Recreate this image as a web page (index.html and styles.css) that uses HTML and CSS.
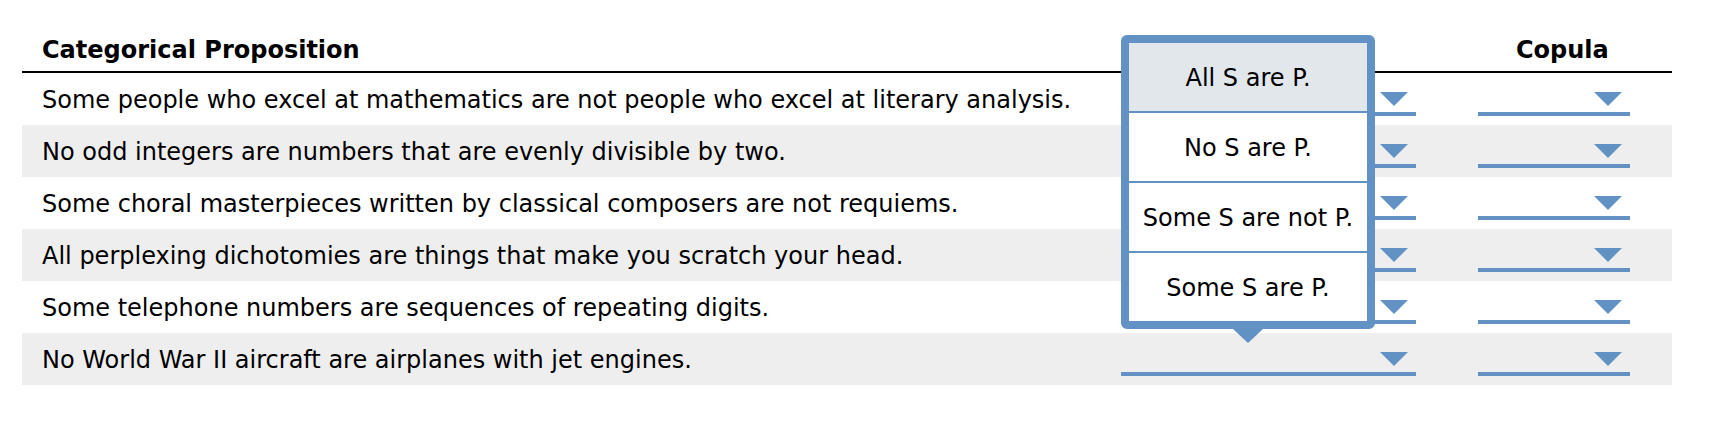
FILE: index.html
```html
<!DOCTYPE html>
<html lang="en">
<head>
<meta charset="utf-8">
<title>Categorical Propositions</title>
<link rel="stylesheet" href="styles.css">
</head>
<body>
<div class="wrap">
  <div class="table">
    <div class="row head">
      <div class="c1">Categorical Proposition</div>
      <div class="c2"></div>
      <div class="c3">Copula</div>
    </div>
    <div class="row">
      <div class="c1">Some people who excel at mathematics are not people who excel at literary analysis.</div>
      <div class="c2"><span class="dd wide"><span class="arrow"></span></span></div>
      <div class="c3"><span class="dd narrow"><span class="arrow"></span></span></div>
    </div>
    <div class="row alt">
      <div class="c1">No odd integers are numbers that are evenly divisible by two.</div>
      <div class="c2"><span class="dd wide"><span class="arrow"></span></span></div>
      <div class="c3"><span class="dd narrow"><span class="arrow"></span></span></div>
    </div>
    <div class="row">
      <div class="c1">Some choral masterpieces written by classical composers are not requiems.</div>
      <div class="c2"><span class="dd wide"><span class="arrow"></span></span></div>
      <div class="c3"><span class="dd narrow"><span class="arrow"></span></span></div>
    </div>
    <div class="row alt">
      <div class="c1">All perplexing dichotomies are things that make you scratch your head.</div>
      <div class="c2"><span class="dd wide"><span class="arrow"></span></span></div>
      <div class="c3"><span class="dd narrow"><span class="arrow"></span></span></div>
    </div>
    <div class="row">
      <div class="c1">Some telephone numbers are sequences of repeating digits.</div>
      <div class="c2"><span class="dd wide"><span class="arrow"></span></span></div>
      <div class="c3"><span class="dd narrow"><span class="arrow"></span></span></div>
    </div>
    <div class="row alt">
      <div class="c1">No World War II aircraft are airplanes with jet engines.</div>
      <div class="c2"><span class="dd wide"><span class="arrow"></span></span></div>
      <div class="c3"><span class="dd narrow"><span class="arrow"></span></span></div>
    </div>
  </div>
  <ul class="popup">
    <li class="opt selected">All S are P.</li>
    <li class="opt">No S are P.</li>
    <li class="opt">Some S are not P.</li>
    <li class="opt">Some S are P.</li>
  </ul>
</div>
</body>
</html>
```
FILE: styles.css
```css
html, body {
  margin: 0;
  padding: 0;
  background: #ffffff;
}

body {
  font-family: "DejaVu Sans", Verdana, sans-serif;
  font-size: 24px;
  color: #000000;
}

.wrap {
  position: relative;
  margin-left: 22px;
  width: 1650px;
  padding-top: 36px;
}

.row {
  display: grid;
  grid-template-columns: 1099px 357px 194px;
  height: 52px;
}

.row.alt {
  background: #eeeeee;
}

.row .c1 {
  padding-left: 20px;
  padding-top: 3px;
  line-height: 49px;
  white-space: nowrap;
}

.row.head {
  height: auto;
  border-bottom: 2px solid #000000;
  padding-bottom: 7px;
  font-weight: bold;
}

.row.head > div {
  padding-top: 0;
  line-height: 28px;
}

.row.head .c3 {
  padding-left: 38px;
}

.dd {
  display: flex;
  justify-content: flex-end;
  box-sizing: border-box;
  height: 24px;
  margin-top: 19px;
  padding-right: 8px;
  border-bottom: 4px solid #6291c4;
}

.dd.wide {
  width: 295px;
}

.dd.narrow {
  width: 152px;
}

.arrow {
  width: 0;
  height: 0;
  border-left: 14px solid transparent;
  border-right: 14px solid transparent;
  border-top: 14px solid #6291c4;
}

.popup {
  position: absolute;
  left: 1099px;
  top: 35px;
  width: 254px;
  box-sizing: border-box;
  margin: 0;
  padding: 0;
  list-style: none;
  border: 8px solid #6291c4;
  border-radius: 6px;
  background: #6291c4;
  display: flex;
  flex-direction: column;
  gap: 2px;
}

.popup::after {
  content: "";
  position: absolute;
  left: 50%;
  bottom: -22px;
  transform: translateX(-50%);
  width: 0;
  height: 0;
  border-left: 15px solid transparent;
  border-right: 15px solid transparent;
  border-top: 14px solid #6291c4;
}

.opt {
  box-sizing: border-box;
  height: 68px;
  padding-top: 3px;
  line-height: 65px;
  text-align: center;
  background: #ffffff;
  white-space: nowrap;
}

.opt.selected {
  background: #e1e7ea;
}
```
